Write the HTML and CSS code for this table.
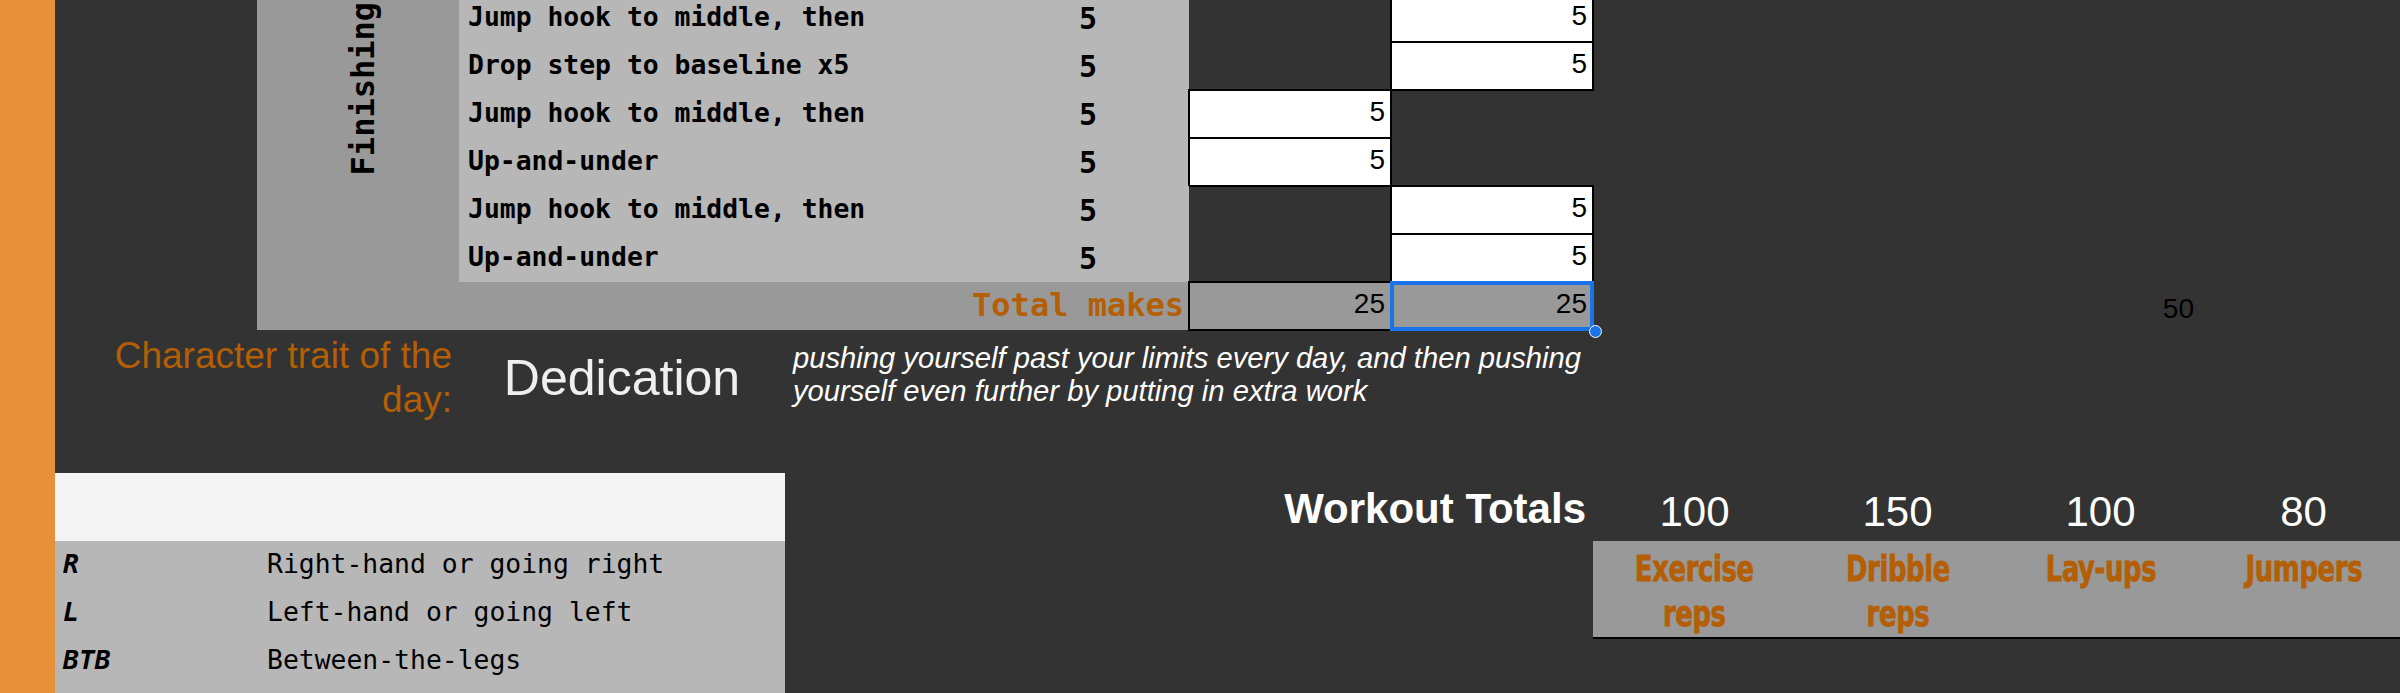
FILE: index.html
```html
<!DOCTYPE html>
<html lang="en">
<head>
<meta charset="utf-8">
<title>Workout sheet</title>
<link rel="stylesheet" href="styles.css">
</head>
<body>
<div class="strip"></div>
<div class="sheet">
  <div class="grid">
    <div class="fin"><span class="fin-label">Finishing</span></div>

    <div class="desc">Jump hook to middle, then</div>
    <div class="reps">5</div>
    <div class="cell c2 white">5</div>

    <div class="desc">Drop step to baseline x5</div>
    <div class="reps">5</div>
    <div class="cell c2 white">5</div>

    <div class="desc">Jump hook to middle, then</div>
    <div class="reps">5</div>
    <div class="cell c1 white">5</div>

    <div class="desc">Up-and-under</div>
    <div class="reps">5</div>
    <div class="cell c1 white">5</div>

    <div class="desc">Jump hook to middle, then</div>
    <div class="reps">5</div>
    <div class="cell c2 white">5</div>

    <div class="desc">Up-and-under</div>
    <div class="reps">5</div>
    <div class="cell c2 white">5</div>

    <div class="total-label">Total makes</div>
    <div class="cell c1 total">25</div>
    <div class="cell c2 total sel">25<span class="handle"></span></div>
    <div class="cell c8 grand">50</div>
  </div>

  <div class="trait">
    <div class="trait-label">Character trait of the day:</div>
    <div class="trait-name">Dedication</div>
    <div class="trait-desc">pushing yourself past your limits every day, and then pushing yourself even further by putting in extra work</div>
  </div>

  <div class="bottom">
    <div class="legend">
      <div class="legend-head"></div>
      <div class="legend-row"><span class="abbr">R</span><span>Right-hand or going right</span></div>
      <div class="legend-row"><span class="abbr">L</span><span>Left-hand or going left</span></div>
      <div class="legend-row"><span class="abbr">BTB</span><span>Between-the-legs</span></div>
      <div class="legend-row"><span class="abbr"></span><span></span></div>
    </div>
    <div class="totals-label">Workout Totals</div>
    <div class="totals">
      <div class="nums">
        <span>100</span><span>150</span><span>100</span><span>80</span>
      </div>
      <div class="band">
        <div class="band-cell"><span class="band-text">Exercise<br>reps</span></div>
        <div class="band-cell"><span class="band-text">Dribble<br>reps</span></div>
        <div class="band-cell"><span class="band-text">Lay-ups</span></div>
        <div class="band-cell"><span class="band-text">Jumpers</span></div>
      </div>
    </div>
  </div>
</div>
</body>
</html>
```

FILE: styles.css
```css
html, body {
  margin: 0;
  height: 100%;
  overflow: hidden;
}

body {
  background: #333333;
  display: flex;
  font-family: "Liberation Sans", Arial, sans-serif;
}

.strip {
  width: 55px;
  flex: none;
  background: #e69138;
}

.sheet {
  flex: 1;
  min-width: 0;
  height: 693px;
  overflow: hidden;
}

/* ---------- top drill table ---------- */
.grid {
  display: grid;
  grid-template-columns: 202px 528px 202px 202px 202px 203px 203px 203px;
  grid-template-rows: repeat(7, 48px);
  margin: -6px 0 0 202px;
}

.fin {
  grid-column: 1;
  grid-row: 1 / span 7;
  background: #999999;
  display: flex;
  justify-content: center;
  align-items: flex-start;
  padding: 8px 0 0 10px;
}

.fin-label {
  writing-mode: vertical-rl;
  transform: rotate(180deg);
  font: bold 32px/36px "DejaVu Sans Mono", monospace;
  color: #000;
}

.desc {
  grid-column: 2;
  background: #b7b7b7;
  display: flex;
  align-items: flex-end;
  padding: 0 0 10px 9px;
  font: bold 26.4px/30px "DejaVu Sans Mono", monospace;
  color: #000;
  white-space: nowrap;
}

.reps {
  grid-column: 3;
  background: #b7b7b7;
  display: flex;
  align-items: flex-end;
  justify-content: center;
  padding-bottom: 8px;
  font: bold 30px/30px "DejaVu Sans Mono", monospace;
  color: #000;
}

.cell {
  display: flex;
  align-items: flex-end;
  justify-content: flex-end;
  padding: 0 6px 10px 0;
  font: 28px/32px "Liberation Sans", Arial, sans-serif;
  color: #000;
}

.c1 { grid-column: 4; }
.c2 { grid-column: 5; }
.c8 { grid-column: 8; }

.white {
  background: #ffffff;
  outline: 2px solid #000;
  outline-offset: -1px;
}

.total-label {
  grid-column: 2 / span 2;
  background: #999999;
  display: flex;
  align-items: flex-end;
  justify-content: flex-end;
  padding: 0 5px 7px 0;
  font: bold 32px/36px "DejaVu Sans Mono", monospace;
  color: #b45f06;
}

.total {
  background: #999999;
  outline: 2px solid #000;
  outline-offset: -1px;
}

.sel {
  position: relative;
  outline: 4px solid #1a73e8;
  outline-offset: -3px;
}

.handle {
  position: absolute;
  right: -9px;
  bottom: -8px;
  width: 11px;
  height: 11px;
  border-radius: 50%;
  background: #1a73e8;
  border: 1.5px solid #ffffff;
  z-index: 2;
}

.grand {
  padding: 0 8px 5px 0;
}

/* ---------- character trait ---------- */
.trait {
  display: flex;
  align-items: flex-start;
  height: 143px;
}

.trait-label {
  width: 404px;
  flex: none;
  box-sizing: border-box;
  padding-right: 7px;
  margin-top: 4px;
  text-align: right;
  font-size: 37px;
  line-height: 44px;
  color: #b45f06;
}

.trait-name {
  width: 326px;
  flex: none;
  margin-top: 19px;
  text-align: center;
  font-size: 50px;
  line-height: 58px;
  color: #efefef;
}

.trait-desc {
  width: 800px;
  flex: none;
  margin: 12px 0 0 8px;
  font-size: 29.2px;
  line-height: 33px;
  font-style: italic;
  color: #ffffff;
}

/* ---------- bottom ---------- */
.bottom {
  display: flex;
  align-items: flex-start;
  height: 220px;
  overflow: hidden;
}

.legend {
  width: 730px;
  flex: none;
}

.legend-head {
  height: 68px;
  background: #f4f4f4;
}

.legend-row {
  display: grid;
  grid-template-columns: 212px 1fr;
  align-items: end;
  height: 48px;
  box-sizing: border-box;
  padding-bottom: 10px;
  background: #b7b7b7;
  font: 26.4px/30px "DejaVu Sans Mono", monospace;
  color: #000;
  white-space: nowrap;
}

.abbr {
  padding-left: 8px;
  font-weight: bold;
  font-style: italic;
}

.totals-label {
  width: 808px;
  height: 68px;
  flex: none;
  box-sizing: border-box;
  display: flex;
  justify-content: flex-end;
  align-items: flex-end;
  padding: 0 7px 8px 0;
  font-weight: bold;
  font-size: 42px;
  line-height: 48px;
  color: #ffffff;
}

.totals {
  width: 812px;
  flex: none;
}

.nums {
  display: grid;
  grid-template-columns: repeat(4, 203px);
  align-items: end;
  height: 68px;
  box-sizing: border-box;
  padding-bottom: 5px;
  text-align: center;
  font-size: 42px;
  line-height: 48px;
  color: #ffffff;
}

.band {
  display: grid;
  grid-template-columns: repeat(4, 203px);
  align-items: start;
  height: 91px;
  padding-top: 5px;
  background: #999999;
  border-bottom: 2px solid #000;
}

.band-cell {
  display: flex;
  justify-content: center;
}

.band-text {
  display: inline-block;
  transform: scaleX(0.8);
  text-align: center;
  font-family: "DejaVu Sans Condensed", "DejaVu Sans", sans-serif;
  font-weight: bold;
  font-size: 36px;
  line-height: 45px;
  letter-spacing: -0.5px;
  color: #b45f06;
  -webkit-text-stroke: 0.8px #b45f06;
}
```
